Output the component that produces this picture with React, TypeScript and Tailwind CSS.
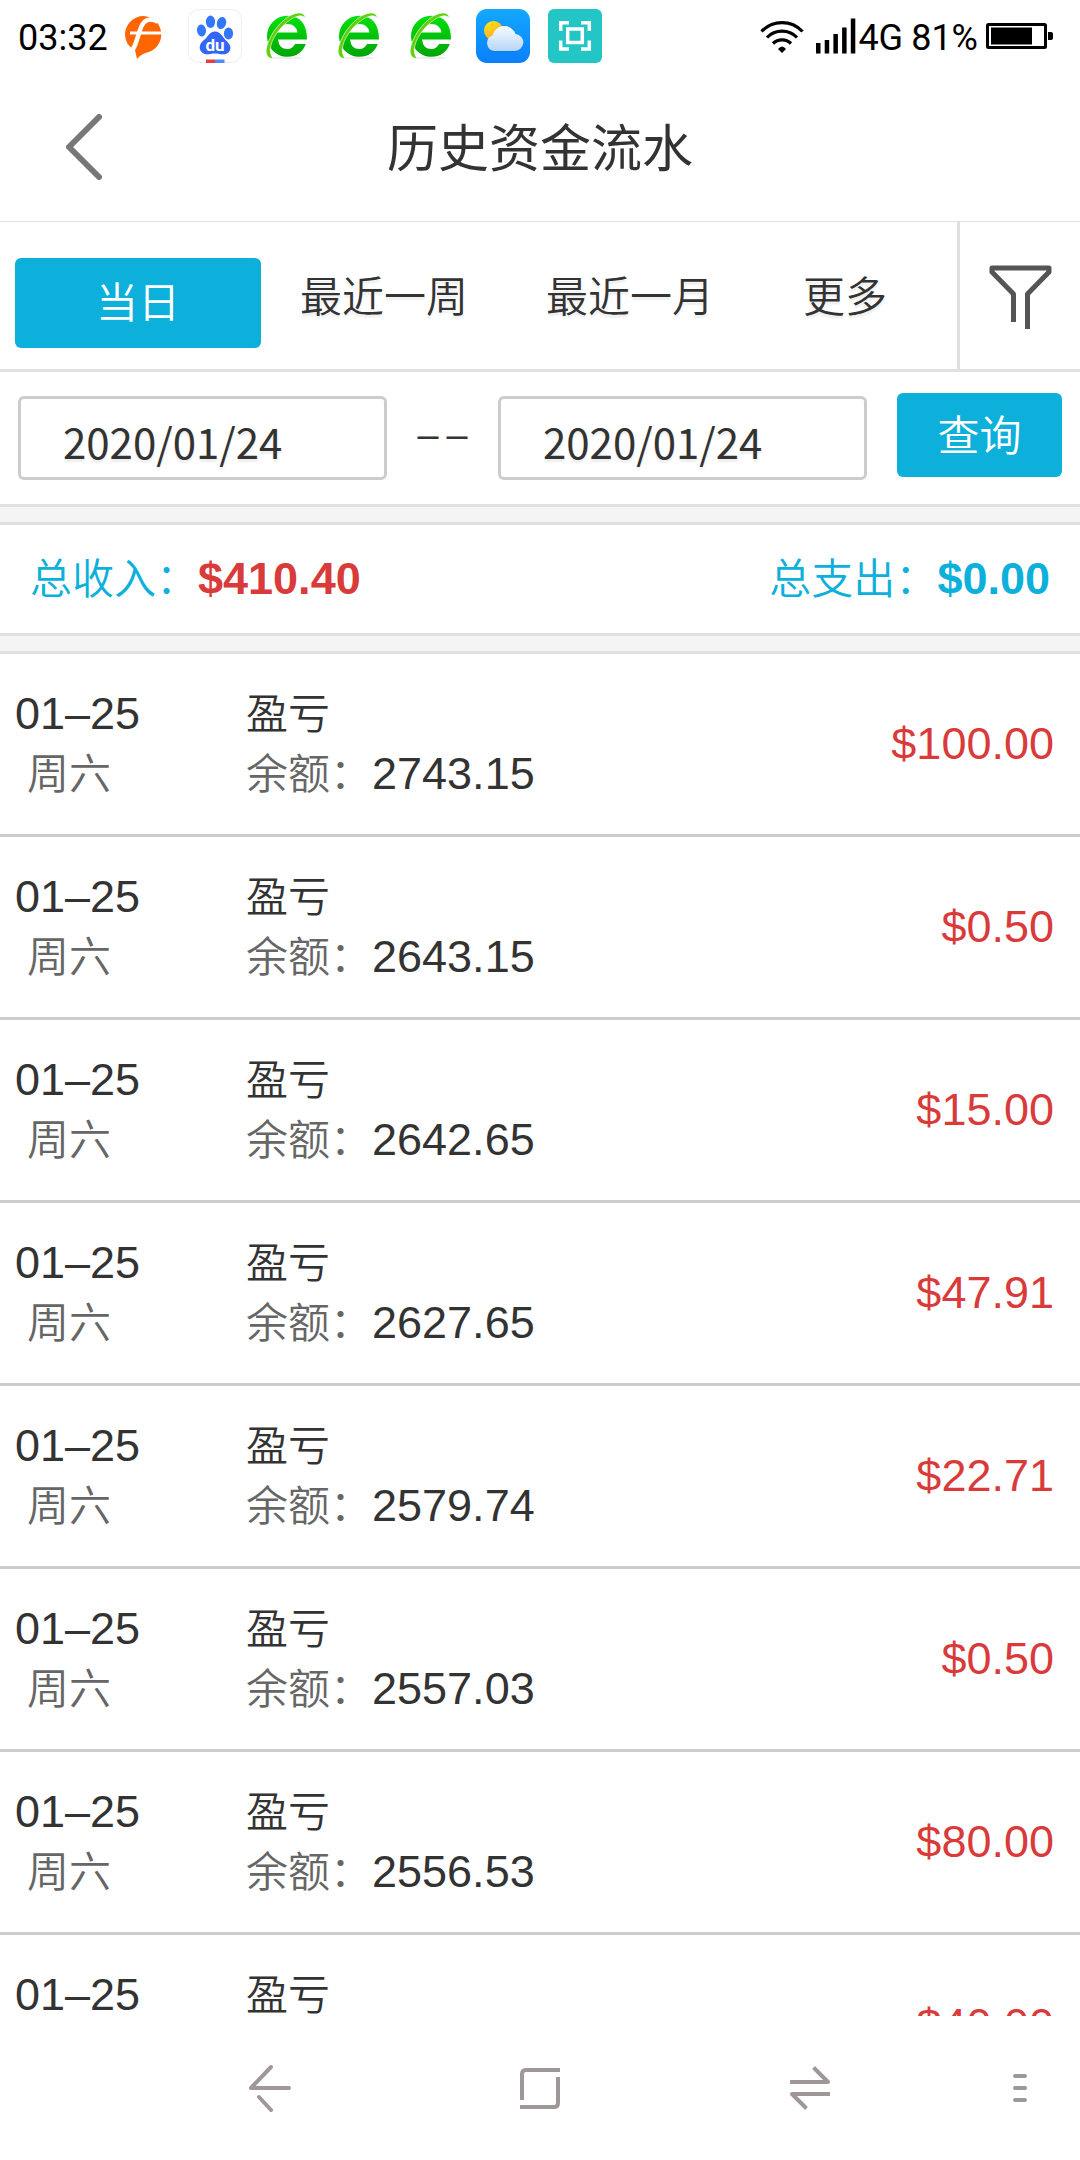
import { useState } from 'react';

interface Entry {
  date: string;
  weekday: string;
  type: string;
  balance: string;
  amount: string;
}

const entries: Entry[] = [
  { date: '01–25', weekday: '周六', type: '盈亏', balance: '2743.15', amount: '$100.00' },
  { date: '01–25', weekday: '周六', type: '盈亏', balance: '2643.15', amount: '$0.50' },
  { date: '01–25', weekday: '周六', type: '盈亏', balance: '2642.65', amount: '$15.00' },
  { date: '01–25', weekday: '周六', type: '盈亏', balance: '2627.65', amount: '$47.91' },
  { date: '01–25', weekday: '周六', type: '盈亏', balance: '2579.74', amount: '$22.71' },
  { date: '01–25', weekday: '周六', type: '盈亏', balance: '2557.03', amount: '$0.50' },
  { date: '01–25', weekday: '周六', type: '盈亏', balance: '2556.53', amount: '$80.00' },
  { date: '01–25', weekday: '周六', type: '盈亏', balance: '2476.53', amount: '$40.00' },
];

const tabs = ['当日', '最近一周', '最近一月', '更多'];

const numeral = "font-['Liberation_Sans',sans-serif] text-[45px]";

function FlipIcon() {
  return (
    <svg width="54" height="54" viewBox="0 0 54 54" fill="none">
      <path d="M27.500 7A18.500 18.500 0 0 1 31 43.500Q25 45 21 50L19 41Q9 36 9 25.500A18.500 18.500 0 0 1 27.500 7z" fill="#ff6600" />
      <path d="M14 44Q18 40 20.500 32L24 21Q27 10.500 34.500 10.500Q39 10.500 42 13" stroke="#fff" strokeWidth="4.500" />
      <path d="M14 24H46" stroke="#fff" strokeWidth="3" />
    </svg>
  );
}

function PawIcon() {
  return (
    <svg width="54" height="54" viewBox="0 0 54 54">
      <rect x="0.5" y="0.5" width="53" height="53" rx="10" fill="#fff" stroke="#eeeeee" />
      <g fill="#3377ff">
        <ellipse cx="13.5" cy="21.500" rx="4.500" ry="6" transform="rotate(-8 13.5 21.500)" />
        <ellipse cx="22.500" cy="12.800" rx="4.600" ry="6.200" />
        <ellipse cx="33.500" cy="14" rx="4.600" ry="6.200" transform="rotate(15 33.500 14)" />
        <ellipse cx="40.500" cy="24.500" rx="4.600" ry="6" />
      </g>
      <path d="M27 22.500C33 22.500 34 28 38 31.500C42 35 44 39 41 43C37 47 32 44.500 27 44.500S17 47 13.500 43C10 39 12 34 16 31C20 28 21 22.500 27 22.500z" fill="#3366f5" />
      <text x="27" y="42" textAnchor="middle" fontFamily="Roboto, sans-serif" fontSize="17" fontWeight="700" fill="#fff">du</text>
      <rect x="18" y="50.500" width="9" height="3.500" fill="#e83c44" />
      <rect x="27" y="50.500" width="9.500" height="3.500" fill="#4f8bfb" />
    </svg>
  );
}

function BrowserIcon() {
  return (
    <svg width="54" height="54" viewBox="0 0 54 54">
      <defs>
        <linearGradient id="browser-body" x1="0" y1="0" x2="0" y2="1">
          <stop offset="0" stopColor="#00e20c" />
          <stop offset="1" stopColor="#00a406" />
        </linearGradient>
      </defs>
      <ellipse cx="28" cy="49" rx="15" ry="1.500" fill="#eeeeee" />
      <path
        d="M47 30.500H18Q19 40 27.500 40Q32.500 40 35 35H45.800Q41 47.700 27 47.700A20 20.500 0 0 1 27 6.700Q47 7 47 30.500zM17 23.500H37.500Q36 15 27.500 15Q19 15 17 23.500z"
        fill="url(#browser-body)"
        fillRule="evenodd"
      />
      <path d="M13.500 49.500C5 50 4 41 10 29C17 15 30 3.500 40 4C43.500 4.300 45 6 45 9C41 3.500 30 9 21 19C11 30 7 43 13.500 49.500z" fill="#5fd00a" stroke="#fff" strokeWidth="0.6" />
    </svg>
  );
}

function WeatherIcon() {
  return (
    <svg width="54" height="54" viewBox="0 0 54 54">
      <defs>
        <linearGradient id="weather-sky" x1="0" y1="0" x2="0" y2="1">
          <stop offset="0" stopColor="#14a8ff" />
          <stop offset="1" stopColor="#0a80fa" />
        </linearGradient>
        <linearGradient id="weather-sun" x1="0" y1="0" x2="0.6" y2="1">
          <stop offset="0" stopColor="#ffec1c" />
          <stop offset="1" stopColor="#ffa51c" />
        </linearGradient>
        <linearGradient id="weather-cloud" x1="0" y1="0" x2="0" y2="1">
          <stop offset="0" stopColor="#f8fbff" />
          <stop offset="1" stopColor="#b5d6f7" />
        </linearGradient>
      </defs>
      <rect width="54" height="54" rx="11" fill="url(#weather-sky)" />
      <circle cx="17.500" cy="21.500" r="9.500" fill="url(#weather-sun)" />
      <path d="M18 43a8 8 0 0 1-1.500-15.500A12 12 0 0 1 39.500 26a8.500 8.500 0 0 1-1.500 17z" fill="#0a6ad8" opacity="0.4" />
      <path d="M18 42a8 8 0 0 1-1.500-15.500A12 12 0 0 1 39.500 25a8.500 8.500 0 0 1-1.500 17z" fill="url(#weather-cloud)" />
    </svg>
  );
}

function CaptureIcon() {
  return (
    <svg width="54" height="54" viewBox="0 0 54 54" fill="none" stroke="#fff" strokeWidth="3.500">
      <rect width="54" height="54" rx="6" fill="#23c5c5" stroke="none" />
      <path d="M12.700 22V13.700H21M33 13.700H41.300V22M41.300 31.500V40H33M21 40H12.700V31.500" />
      <rect x="19.700" y="20" width="14.600" height="13.500" />
    </svg>
  );
}

function WifiIcon() {
  return (
    <svg width="44" height="36" viewBox="0 0 44 36" fill="none" stroke="#000" strokeWidth="3.200">
      <path d="M1.500 13.500A28 28 0 0 1 42.500 13.500" />
      <path d="M7 19.500A21 21 0 0 1 37 19.500" />
      <path d="M13 25.500A13 13 0 0 1 31 25.500" />
      <path d="M22 35L18 31Q22 26 26 31z" fill="#000" stroke="none" />
    </svg>
  );
}

function SignalIcon() {
  return (
    <svg width="40" height="36" viewBox="0 0 40 36">
      <rect x="0" y="25" width="4.500" height="10.500" />
      <rect x="8.700" y="22" width="4.500" height="13.500" />
      <rect x="17.400" y="16" width="4.500" height="19.500" />
      <rect x="26.100" y="9.500" width="4.500" height="26" />
      <rect x="34.800" y="0.500" width="4.500" height="35" />
    </svg>
  );
}

function BatteryIcon() {
  return (
    <svg width="68" height="26" viewBox="0 0 68 26">
      <rect x="1.500" y="1.500" width="58" height="23" rx="1" fill="none" stroke="#000" strokeWidth="3" />
      <rect x="5" y="4.500" width="41" height="17" />
      <path d="M62 9h3q2 0 2 2v4q0 2-2 2h-3z" />
    </svg>
  );
}

function StatusBar() {
  return (
    <div className="flex h-[72px] shrink-0 items-center justify-between pl-[18px] pr-[26px] font-['Roboto',sans-serif] text-[36px] font-normal leading-[54px] text-black">
      <div className="flex items-center">
        <span className="mr-2 pt-1">03:32</span>
        <div className="flex items-center gap-[18px]">
          <FlipIcon />
          <PawIcon />
          <BrowserIcon />
          <BrowserIcon />
          <BrowserIcon />
          <WeatherIcon />
          <CaptureIcon />
        </div>
      </div>
      <div className="flex items-center">
        <WifiIcon />
        <span className="ml-3 mr-0.5">
          <SignalIcon />
        </span>
        <span className="pt-1">4G</span>
        <span className="mx-2 pt-1">81%</span>
        <BatteryIcon />
      </div>
    </div>
  );
}

function Row({ entry }: { entry: Entry }) {
  return (
    <li className="flex items-center border-b-3 border-[#cccccc] py-[30px] pl-[15px] pr-[26px]">
      <div className="w-[231px] shrink-0">
        <p className={`h-[60px] text-[#333333] ${numeral}`}>{entry.date}</p>
        <p className="h-[60px] pl-3 text-[#666666]">{entry.weekday}</p>
      </div>
      <div className="flex-1">
        <p className="h-[60px] text-[#333333]">{entry.type}</p>
        <p className="flex h-[60px]">
          <span className="text-[#666666]">余额：</span>
          <span className={`text-[#333333] ${numeral}`}>{entry.balance}</span>
        </p>
      </div>
      <p className={`text-[#d93a3a] ${numeral}`}>{entry.amount}</p>
    </li>
  );
}

function NavBar() {
  return (
    <nav className="grid h-36 shrink-0 grid-cols-[1fr_2fr_2fr_2fr_1fr] items-center bg-white">
      <button aria-label="返回上一页" className="col-start-2 flex justify-center">
        <svg width="48" height="48" viewBox="0 0 48 48" fill="none" stroke="#a09898" strokeWidth="4" strokeLinecap="round" strokeLinejoin="round">
          <path d="M25 3L5 24H43" />
          <path d="M13 33L25 46" />
        </svg>
      </button>
      <button aria-label="主屏幕" className="flex justify-center">
        <svg width="48" height="48" viewBox="0 0 48 48" fill="none" stroke="#a09898" strokeWidth="4">
          <path d="M44 6H10Q6 6 6 10V36" />
          <path d="M4 43H38Q42 43 42 39V13" />
        </svg>
      </button>
      <button aria-label="切换应用" className="flex justify-center">
        <svg width="48" height="48" viewBox="0 0 48 48" fill="none" stroke="#a09898" strokeWidth="4" strokeLinejoin="round">
          <path d="M4 18H42L27.500 3.500" />
          <path d="M44 30H6L20.500 44.500" />
        </svg>
      </button>
      <button aria-label="菜单" className="flex justify-center pl-3.5">
        <svg width="14" height="28" viewBox="0 0 14 28" stroke="#999999" strokeWidth="4" strokeLinecap="round">
          <path d="M2 2H12M2 14H12M2 26H12" />
        </svg>
      </button>
    </nav>
  );
}

export default function App() {
  const [active, setActive] = useState(tabs[0]);
  const [from, setFrom] = useState('2020/01/24');
  const [to, setTo] = useState('2020/01/24');

  const dateClass =
    "h-[84px] min-w-0 flex-1 rounded-md border-3 border-[#cccccc] bg-white pl-[42px] pt-1 font-['Noto_Sans_CJK_SC',sans-serif] text-[42px] font-normal text-[#333333] [text-shadow:0_3px_2px_#eeeeee] outline-none";

  return (
    <div className="flex h-screen flex-col bg-white font-['Inter','Noto_Sans_CJK_SC',sans-serif] text-[42px] font-[350] leading-[60px]">
      <StatusBar />

      <header className="grid h-[150px] shrink-0 grid-cols-[1fr_auto_1fr] items-center border-b border-[#e0e0e0]">
        <button aria-label="返回" className="ml-[66px] justify-self-start">
          <svg width="36" height="66" viewBox="0 0 36 66" fill="none" stroke="#777777" strokeWidth="6" strokeLinecap="round" strokeLinejoin="round">
            <path d="M33 3L3 33L33 63" />
          </svg>
        </button>
        <h1 className="pt-1 text-[51px] font-normal text-[#333333]">历史资金流水</h1>
      </header>

      <div className="flex h-[150px] shrink-0 border-b-3 border-[#e0e0e0]">
        <div className="flex flex-1 items-center pl-[15px] pr-5" role="tablist">
          {tabs.map((tab, i) => (
            <button
              key={tab}
              role="tab"
              aria-selected={tab === active}
              onClick={() => setActive(tab)}
              className={`${i < 3 ? 'w-[246px]' : 'flex-1'} ${
                tab === active
                  ? 'mt-[15px] h-[90px] rounded-md bg-[#0db0db] text-white'
                  : 'pt-0.5 text-[#333333] [text-shadow:0_3px_2px_#eeeeee]'
              }`}
            >
              {tab}
            </button>
          ))}
        </div>
        <button aria-label="筛选" className="flex w-[123px] items-center justify-center border-l-3 border-[#e0e0e0]">
          <svg width="64" height="66" viewBox="0 0 64 66" fill="none" stroke="#555555" strokeWidth="5">
            <path d="M25.500 59V31L4 9V5H61V9L39.500 31V66" strokeLinejoin="round" />
          </svg>
        </button>
      </div>

      <form
        className="flex h-[135px] shrink-0 items-center border-b-3 border-[#e0e0e0] pl-[18px] pr-[18px]"
        onSubmit={(e) => e.preventDefault()}
      >
        <input aria-label="开始日期" type="text" value={from} onChange={(e) => setFrom(e.target.value)} className={dateClass} />
        <span className="mb-1 flex w-[111px] justify-center gap-2 text-[#333333]">
          <span>–</span>
          <span>–</span>
        </span>
        <input aria-label="结束日期" type="text" value={to} onChange={(e) => setTo(e.target.value)} className={dateClass} />
        <button type="submit" className="mb-1.5 ml-[30px] h-[84px] w-[165px] rounded-md bg-[#0db0db] pt-0.5 text-white">
          查询
        </button>
      </form>

      <div className="h-[15px] shrink-0 bg-[#f4f4f4]" />

      <section className="flex h-[114px] shrink-0 items-center justify-between border-y-3 border-[#e0e0e0] px-[30px] text-[#0db0db]">
        <p className="flex">
          总收入：<span className={`font-bold text-[#d93a3a] ${numeral}`}>$410.40</span>
        </p>
        <p className="flex">
          总支出：<span className={`font-bold ${numeral}`}>$0.00</span>
        </p>
      </section>

      <div className="h-[15px] shrink-0 bg-[#f4f4f4]" />

      <ul className="min-h-0 flex-1 overflow-y-auto border-t-3 border-[#e0e0e0] [scrollbar-width:none]">
        {entries.map((entry, i) => (
          <Row key={i} entry={entry} />
        ))}
      </ul>

      <NavBar />
    </div>
  );
}
